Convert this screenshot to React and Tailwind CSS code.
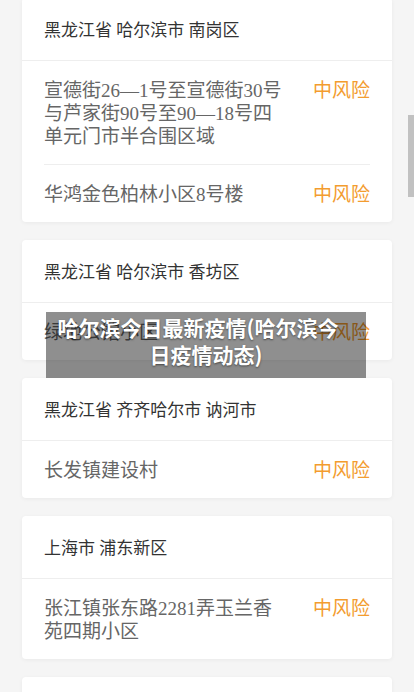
import React from "react";

const groups = [
  {
    area: "黑龙江省 哈尔滨市 南岗区",
    items: [
      "宣德街26—1号至宣德街30号与芦家街90号至90—18号四单元门市半合围区域",
      "华鸿金色柏林小区8号楼",
    ],
  },
  { area: "黑龙江省 哈尔滨市 香坊区", items: ["绿地公馆小区"] },
  { area: "黑龙江省 齐齐哈尔市 讷河市", items: ["长发镇建设村"] },
  { area: "上海市 浦东新区", items: ["张江镇张东路2281弄玉兰香苑四期小区"] },
  { area: "上海市 闵行区", items: ["七宝镇中春路7001号"] },
];

export default function App() {
  return (
    <div
      className="relative h-[692px] overflow-hidden bg-[#f5f5f5]"
      style={{ fontFamily: '"Liberation Serif", "Noto Sans CJK SC", serif' }}
    >
      <div className="mt-[-2px] flex flex-col gap-[18px] px-[22px]">
        {groups.map((g) => (
          <div
            key={g.area}
            className="rounded-[4px] bg-white shadow-[0_1px_4px_rgba(0,0,0,0.05)]"
          >
            {/* area header */}
            <div className="flex h-[63px] items-center border-b border-[#eeeeee] px-[22px] pt-[4px] text-[17px] text-[#333]">
              {g.area}
            </div>
            {g.items.map((it, i) => (
              <div key={it} className="px-[22px]">
                <div
                  className={`flex items-start justify-between pb-[16px] pt-[18px] ${
                    i < g.items.length - 1 ? "border-b border-[#eeeeee]" : ""
                  }`}
                >
                  <div className="w-[242px] text-[19px] leading-[23px] text-[#666]">
                    {it}
                  </div>
                  <div className="text-[19px] leading-[23px] text-[#f39c2f]">
                    中风险
                  </div>
                </div>
              </div>
            ))}
          </div>
        ))}
      </div>

      {/* title overlay */}
      <div
        className="absolute left-[46px] top-[312px] h-[66px] w-[320px] bg-[rgba(0,0,0,0.44)] pt-[2px] text-center text-[21px] font-bold leading-[27px] text-white [text-shadow:0_1px_2px_rgba(0,0,0,0.5)]"
        style={{ fontFamily: '"Noto Sans CJK SC", sans-serif' }}
      >
        <div className="pr-[16px]">哈尔滨今日最新疫情(哈尔滨今</div>
        <div>日疫情动态)</div>
      </div>

      {/* scrollbar thumb */}
      <div className="absolute left-[408px] top-[115px] h-[82px] w-[6px] bg-[#c1c1c1]" />
    </div>
  );
}
